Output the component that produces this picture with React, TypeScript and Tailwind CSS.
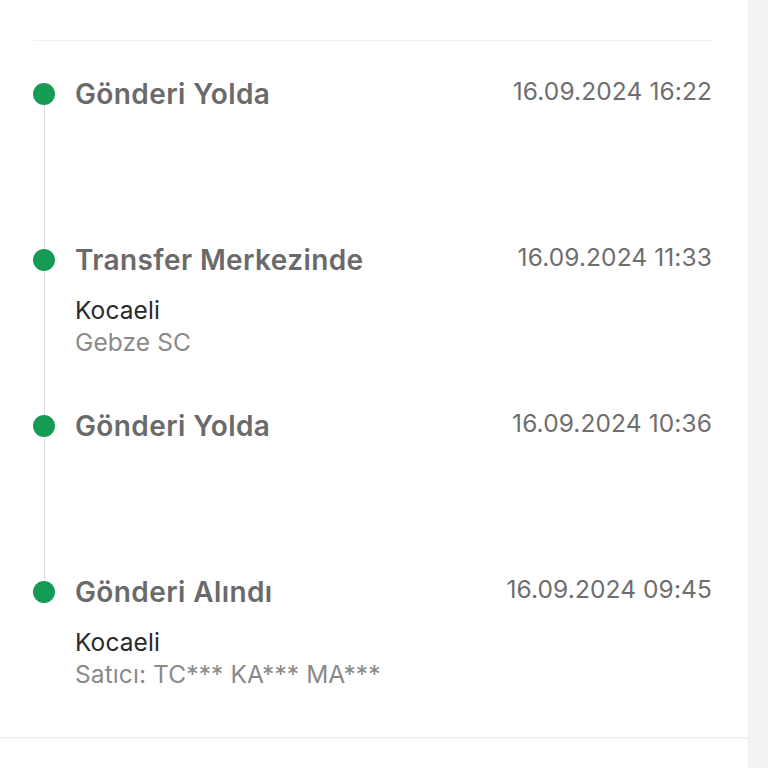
const events = [
  { title: "Gönderi Yolda", date: "16.09.2024 16:22", lines: [] as string[] },
  { title: "Transfer Merkezinde", date: "16.09.2024 11:33", lines: ["Kocaeli", "Gebze SC"] },
  { title: "Gönderi Yolda", date: "16.09.2024 10:36", lines: [] as string[] },
  { title: "Gönderi Alındı", date: "16.09.2024 09:45", lines: ["Kocaeli", "Satıcı: TC*** KA*** MA***"] },
];

function App() {
  return (
    <div className="flex w-full h-[768px] overflow-hidden bg-white font-['Inter','Noto_Sans',sans-serif]">
      <div className="w-[748px] flex flex-col">
        <div className="px-[33px] pr-[36px]">
          <div className="h-[41px] border-b border-[#efefef]" />
        </div>

        {/* Timeline */}
        <div className="flex flex-col pl-[33px] pr-[36px] pt-[37px] pb-[47px]">
          {events.map((ev, i) => {
            const last = i === events.length - 1;
            return (
              <div key={i} className={`flex ${last ? "" : "h-[166px]"}`}>
                <div className="w-[22px] flex flex-col items-center">
                  <div className="mt-[5px] w-[22px] h-[22px] rounded-full bg-[#169b55] shrink-0" />
                  {!last && <div className="flex-1 w-px bg-[#dcdcdc] -mb-[5px]" />}
                </div>
                <div className="flex-1 ml-[20px] flex flex-col">
                  <div className="flex items-start justify-between">
                    <span className="text-[28px] leading-[32px] font-semibold tracking-[0.4px] text-[#6a6a6a]">{ev.title}</span>
                    <span className="text-[24.5px] leading-[26px] tracking-[0.1px] text-[#6e6e6e]">{ev.date}</span>
                  </div>
                  {ev.lines.length > 0 && (
                    <div className="mt-[18px] flex flex-col">
                      <span className="text-[24.5px] leading-[32px] tracking-[0.1px] text-[#2a2a2a]">{ev.lines[0]}</span>
                      <span className="text-[24.5px] leading-[32px] tracking-[0.1px] text-[#8a8a8a]">{ev.lines[1]}</span>
                    </div>
                  )}
                </div>
              </div>
            );
          })}
        </div>

        <div className="border-t-2 border-[#f3f3f3]" />
      </div>
      <div className="flex-1 bg-[#f3f3f3] border-l border-[#ececec]" />
    </div>
  );
}

export default App;
